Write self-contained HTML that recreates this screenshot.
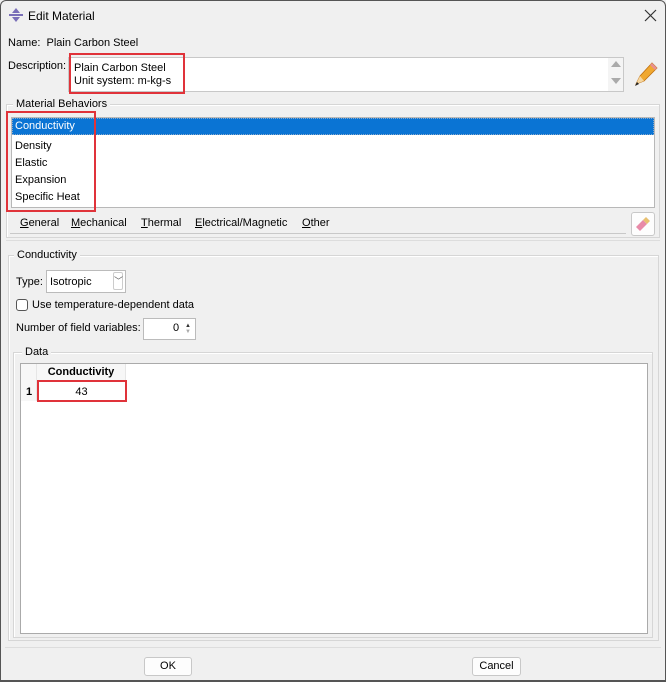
<!DOCTYPE html>
<html><head><style>
*{box-sizing:border-box;margin:0;padding:0}
body{width:666px;height:682px;background:#f0f0f0;font-family:"Liberation Sans",sans-serif;font-size:11px;color:#000;position:relative;overflow:hidden}
.a{position:absolute}
.win{position:absolute;left:0;top:0;width:666px;height:682px;border:1px solid #555;border-radius:6px 6px 0 0;border-bottom:2px solid #555}
.grp{position:absolute;border:1px solid #d6d6d6;box-shadow:1px 1px 0 #fff inset}
.lbl{position:absolute;background:#f0f0f0;padding:0 3px}
.red{position:absolute;border:2px solid #e0333a}
.btn{position:absolute;background:#fdfdfd;border:1px solid #c8c8c8;border-radius:3px;text-align:center;line-height:17px}
u{text-decoration:underline}
</style></head><body>
<div class="win"></div>
<svg class="a" style="left:8px;top:7px" width="16" height="16" viewBox="0 0 16 16"><path d="M8 1L12 6H4Z" fill="#7a6fb8"/><path d="M8 15L12 10H4Z" fill="#7a6fb8"/><rect x="1" y="7" width="14" height="2" fill="#7a6fb8"/></svg>
<div class="a" style="left:28px;top:9px;font-size:12px">Edit Material</div>
<svg class="a" style="left:644px;top:9px" width="13" height="13" viewBox="0 0 13 13"><path d="M1 1L12 12M12 1L1 12" stroke="#333" stroke-width="1.2"/></svg>

<div class="a" style="left:8px;top:37px">Name:&nbsp; Plain Carbon Steel</div>
<div class="a" style="left:8px;top:60px">Description:</div>
<div class="a" style="left:68px;top:57px;width:556px;height:35px;background:#fff;border:1px solid #c8c8c8"></div>
<div class="a" style="left:608px;top:58px;width:15px;height:33px;background:#f4f4f4"></div>
<div class="a" style="left:611px;top:61px;width:0;height:0;border:5px solid transparent;border-bottom:6px solid #aaa;border-top:0"></div>
<div class="a" style="left:611px;top:78px;width:0;height:0;border:5px solid transparent;border-top:6px solid #aaa;border-bottom:0"></div>
<div class="a" style="left:74px;top:62px;line-height:13px">Plain Carbon Steel<br>Unit system: m-kg-s</div>
<div class="red" style="left:69px;top:53px;width:116px;height:41px"></div>
<svg class="a" style="left:632px;top:60px" width="26" height="28" viewBox="0 0 26 28"><path d="M4 24L8 16L20 3L25 8L12 21Z" fill="#f0a830" stroke="#c07010" stroke-width=".8"/><path d="M20 3L25 8L23 10L18 5Z" fill="#e89090"/><path d="M4 24L8 16L12 21Z" fill="#f5d6a0"/><path d="M3 26L5 22L7 24Z" fill="#222"/></svg>

<div class="grp" style="left:6px;top:104px;width:654px;height:134px"></div>
<div class="lbl" style="left:13px;top:98px">Material Behaviors</div>
<div class="a" style="left:11px;top:117px;width:644px;height:91px;background:#fff;border:1px solid #b8b8b8"></div>
<div class="a" style="left:12px;top:118px;width:642px;height:17px;background:#0a74d4;border:1px dotted #8ac"></div>
<div class="a" style="left:15px;top:120px;color:#fff">Conductivity</div>
<div class="a" style="left:15px;top:138px;line-height:17px">Density<br>Elastic<br>Expansion<br>Specific Heat</div>
<div class="red" style="left:6px;top:111px;width:90px;height:101px"></div>
<div class="a" style="left:10px;top:233px;width:616px;height:1px;background:#c8c8c8"></div>
<div class="a" style="left:20px;top:217px"><u>G</u>eneral</div>
<div class="a" style="left:71px;top:217px"><u>M</u>echanical</div>
<div class="a" style="left:141px;top:217px"><u>T</u>hermal</div>
<div class="a" style="left:195px;top:217px"><u>E</u>lectrical/Magnetic</div>
<div class="a" style="left:302px;top:217px"><u>O</u>ther</div>
<div class="btn" style="left:631px;top:212px;width:24px;height:24px"></div>
<svg class="a" style="left:634px;top:215px" width="18" height="18" viewBox="0 0 18 18"><path d="M2 12L9 5L13 9L6 16Z" fill="#e88aa8"/><path d="M9 5L12 2L16 6L13 9Z" fill="#e8c070"/></svg>

<div class="a" style="left:6px;top:240px;width:654px;height:1px;background:#ddd"></div>
<div class="grp" style="left:8px;top:255px;width:651px;height:386px"></div>
<div class="lbl" style="left:14px;top:249px">Conductivity</div>
<div class="a" style="left:16px;top:276px">Type:</div>
<div class="a" style="left:46px;top:270px;width:80px;height:23px;background:#fff;border:1px solid #bbb"></div>
<div class="a" style="left:50px;top:276px">Isotropic</div>
<div class="a" style="left:113px;top:272px;width:10px;height:18px;border:1px solid #ccc;border-radius:2px;text-align:center;font-size:9px;color:#666;line-height:16px">﹀</div>
<div class="a" style="left:16px;top:299px;width:12px;height:12px;border:1px solid #555;border-radius:3px;background:#fff"></div>
<div class="a" style="left:32px;top:299px">Use temperature-dependent data</div>
<div class="a" style="left:16px;top:322px">Number of field variables:</div>
<div class="a" style="left:143px;top:318px;width:53px;height:22px;background:#fff;border:1px solid #bbb"></div>
<div class="a" style="left:173px;top:322px">0</div>
<div class="a" style="left:185px;top:323px;font-size:6px;line-height:6px;color:#333">▲<br><span style="color:#aaa">▼</span></div>

<div class="grp" style="left:13px;top:352px;width:640px;height:286px"></div>
<div class="lbl" style="left:22px;top:346px">Data</div>
<div class="a" style="left:20px;top:363px;width:628px;height:271px;background:#fff;border:1px solid #aaa"></div>
<div class="a" style="left:21px;top:364px;width:16px;height:37px;background:#f7f7f7;border-right:1px solid #e6e6e6"></div>
<div class="a" style="left:37px;top:364px;width:89px;height:16px;background:#f7f7f7;border-right:1px solid #e6e6e6;text-align:center;font-weight:bold;line-height:17px">Conductivity</div>
<div class="a" style="left:26px;top:386px;font-weight:bold">1</div>
<div class="a" style="left:37px;top:380px;width:89px;height:21px;border-bottom:1px solid #e6e6e6"></div>
<div class="a" style="left:37px;top:386px;width:89px;text-align:center">43</div>
<div class="red" style="left:37px;top:380px;width:90px;height:22px"></div>

<div class="a" style="left:5px;top:647px;width:656px;height:1px;background:#ddd"></div>
<div class="btn" style="left:144px;top:657px;width:48px;height:19px">OK</div>
<div class="btn" style="left:472px;top:657px;width:49px;height:19px">Cancel</div>
</body></html>
